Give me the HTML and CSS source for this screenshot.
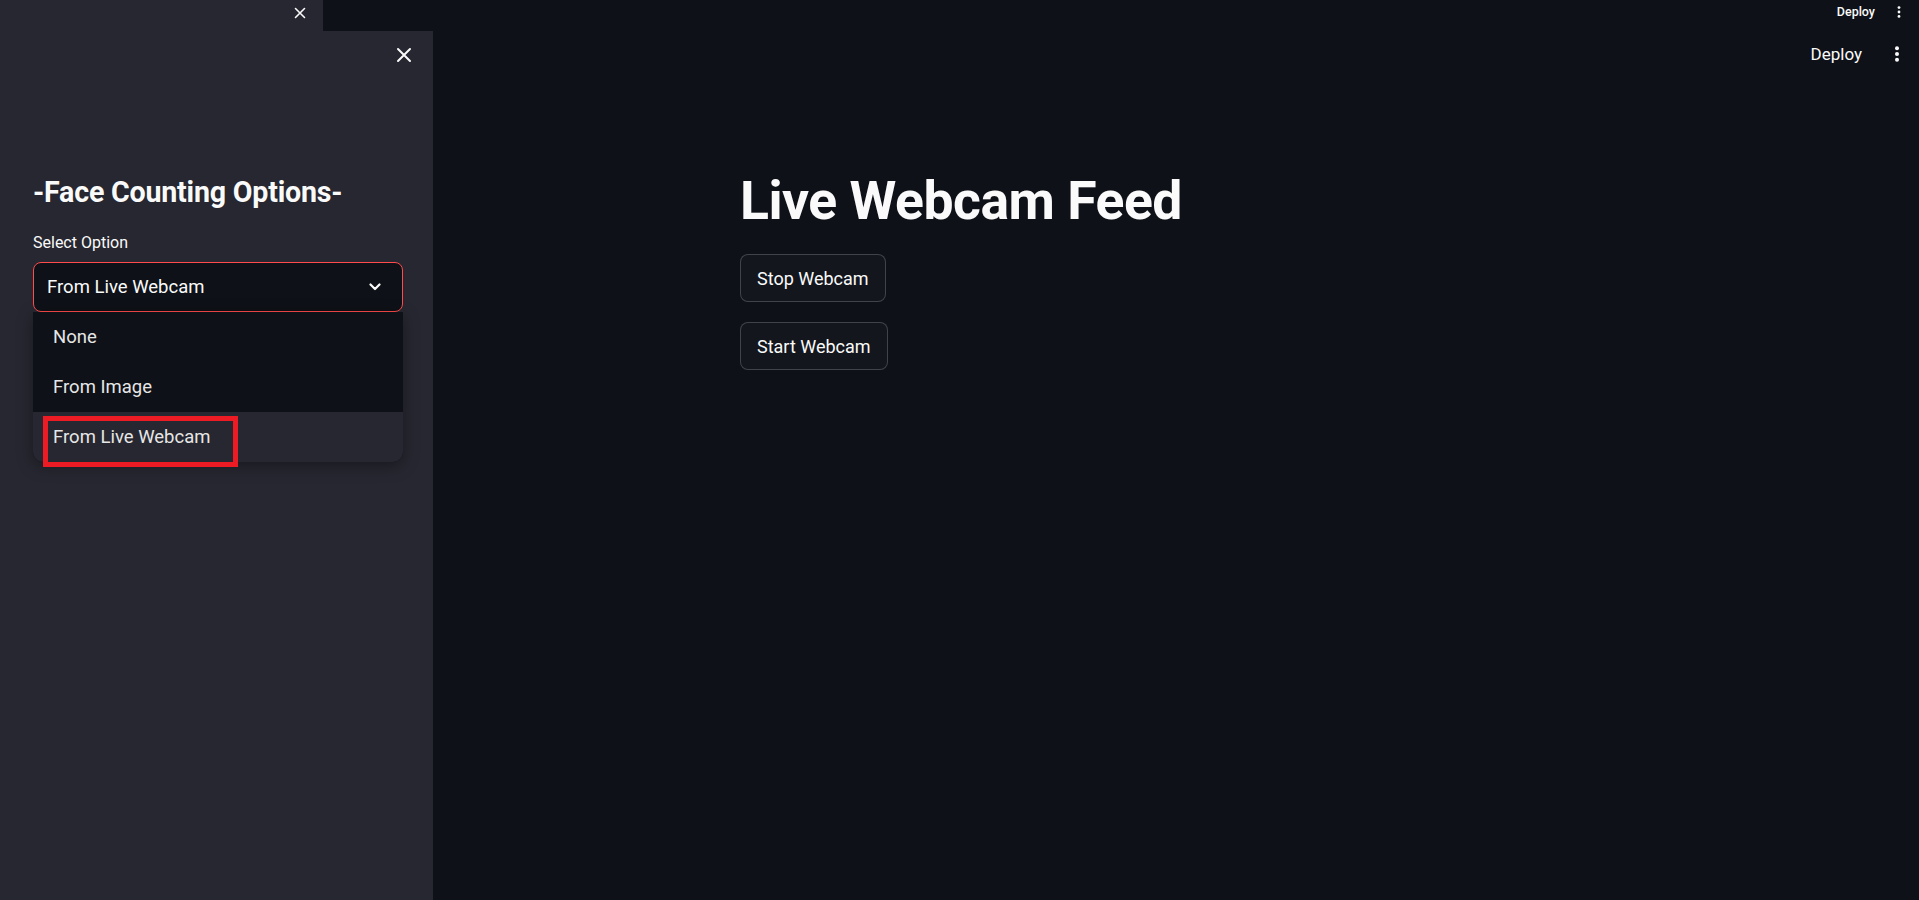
FILE: index.html
```html
<!DOCTYPE html>
<html>
<head>
<meta charset="utf-8">
<link rel="stylesheet" href="styles.css">
</head>
<body>
<div class="topbar">
  <div class="tab">
    <svg class="tab-x" width="12" height="12" viewBox="0 0 12 12"><path d="M1.5 1.5 L10.5 10.5 M10.5 1.5 L1.5 10.5" stroke="#fafafa" stroke-width="1.6" stroke-linecap="round"/></svg>
  </div>
  <div class="top-actions">
    <span class="top-deploy">Deploy</span>
    <svg class="top-dots" width="4" height="12" viewBox="0 0 4 12"><circle cx="2" cy="1.6" r="1.4" fill="#fafafa"/><circle cx="2" cy="6" r="1.4" fill="#fafafa"/><circle cx="2" cy="10.4" r="1.4" fill="#fafafa"/></svg>
  </div>
</div>
<div class="app">
  <aside class="sidebar">
    <div class="side-head">
      <svg class="side-x" width="16" height="16" viewBox="0 0 16 16"><path d="M2 2 L14 14 M14 2 L2 14" stroke="#fafafa" stroke-width="2" stroke-linecap="round"/></svg>
    </div>
    <h3 class="side-title">-Face Counting Options-</h3>
    <label class="field-label">Select Option</label>
    <div class="select">
      <span class="select-value">From Live Webcam</span>
      <svg class="chev" width="12" height="8" viewBox="0 0 12 8"><path d="M1.5 1.5 L6 6 L10.5 1.5" fill="none" stroke="#fafafa" stroke-width="2.2" stroke-linecap="round" stroke-linejoin="round"/></svg>
    </div>
    <ul class="menu">
      <li class="item">None</li>
      <li class="item">From Image</li>
      <li class="item active">From Live Webcam<span class="mark"></span></li>
    </ul>
  </aside>
  <main class="main">
    <div class="main-head">
      <span class="deploy">Deploy</span>
      <svg class="dots" width="6" height="16" viewBox="0 0 6 16"><circle cx="3" cy="2.2" r="2" fill="#fafafa"/><circle cx="3" cy="8" r="2" fill="#fafafa"/><circle cx="3" cy="13.8" r="2" fill="#fafafa"/></svg>
    </div>
    <div class="content">
      <h1 class="title">Live Webcam Feed</h1>
      <button class="btn">Stop Webcam</button>
      <button class="btn">Start Webcam</button>
    </div>
  </main>
</div>
</body>
</html>
```

FILE: styles.css
```css
* { box-sizing: border-box; }
html, body { margin: 0; padding: 0; }
body {
  background: #0e1117;
  color: #fafafa;
  font-family: Roboto, "Noto Sans", sans-serif;
  height: 900px;
  overflow: hidden;
}
.topbar {
  height: 31px;
  display: flex;
  align-items: center;
  justify-content: space-between;
}
.tab {
  width: 323px;
  height: 31px;
  background: #262730;
  display: flex;
  align-items: center;
  justify-content: flex-end;
  padding-right: 17px;
  padding-bottom: 6px;
}
.top-actions {
  display: flex;
  align-items: center;
  gap: 22px;
  padding-right: 18px;
  padding-bottom: 8px;
}
.top-deploy { font-size: 12.5px; font-weight: 500; }
.app {
  display: flex;
  height: 869px;
}
.sidebar {
  width: 433px;
  flex: none;
  background: #262730;
  padding: 0 30px 0 33px;
}
.side-head {
  height: 48px;
  display: flex;
  justify-content: flex-end;
  align-items: center;
  margin-right: -9px;
}
.side-title {
  margin: 93px 0 0 0;
  font-size: 28.6px;
  font-weight: 700;
  line-height: 40px;
  letter-spacing: -0.2px;
}
.field-label {
  display: block;
  margin-top: 19px;
  font-size: 16px;
  line-height: 24px;
}
.select {
  margin-top: 7px;
  height: 50px;
  border: 1px solid #ff4b4b;
  border-radius: 8px;
  background: #0e1117;
  display: flex;
  align-items: center;
  justify-content: space-between;
  padding: 0 21px 0 13px;
}
.select-value { font-size: 18.5px; }
.menu {
  list-style: none;
  margin: 0;
  padding: 0;
  background: #0e1117;
  border-radius: 0 0 10px 10px;
  box-shadow: 0 4px 16px rgba(0,0,0,0.35);
}
.item {
  height: 50px;
  display: flex;
  align-items: center;
  padding-left: 20px;
  font-size: 18.5px;
  color: #e6e6e6;
  position: relative;
}
.item.active {
  background: #262730;
  border-radius: 0 0 10px 10px;
}
.mark {
  position: absolute;
  left: 10px;
  top: 4px;
  width: 195px;
  height: 51px;
  border: 5px solid #ed1c24;
}
.main {
  flex: 1;
  display: flex;
  flex-direction: column;
}
.main-head {
  height: 46px;
  display: flex;
  align-items: center;
  justify-content: flex-end;
  gap: 32px;
  padding-right: 19px;
}
.deploy { font-size: 17px; }
.content {
  width: 872px;
  margin: 0 auto;
  display: flex;
  flex-direction: column;
  align-items: flex-start;
}
.title {
  margin: 92px 0 0 0;
  font-size: 53.5px;
  font-weight: 700;
  line-height: 64px;
  letter-spacing: -0.5px;
}
.btn {
  margin-top: 21px;
  height: 48px;
  padding: 0 16px;
  background: #13161d;
  border: 1px solid rgba(250,250,250,0.2);
  border-radius: 8px;
  color: #fafafa;
  font-family: inherit;
  font-size: 18px;
}
.btn + .btn { margin-top: 20px; }
```
